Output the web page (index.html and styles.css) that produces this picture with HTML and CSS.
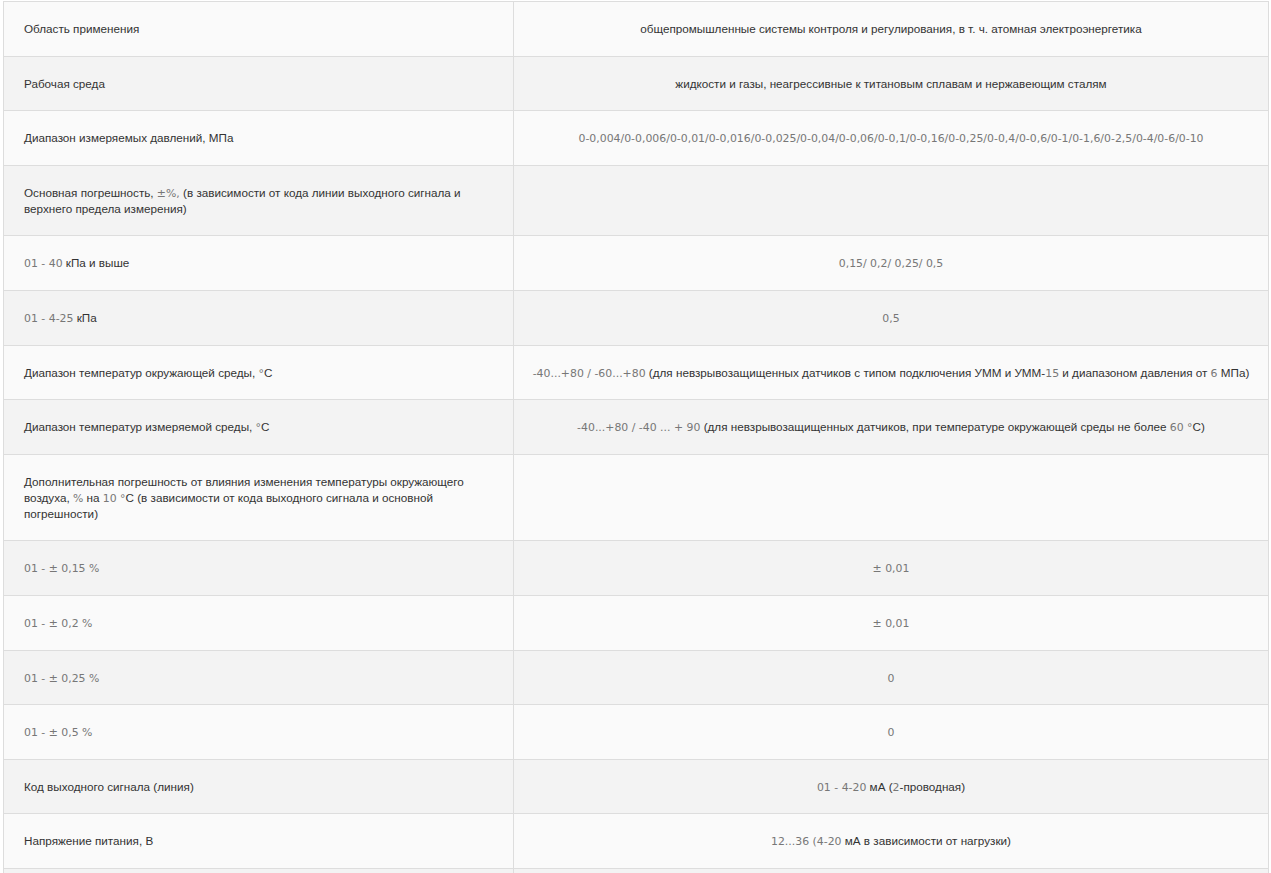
FILE: index.html
```html
<!DOCTYPE html>
<html lang="ru">
<head>
<meta charset="utf-8">
<title>Характеристики</title>
<link rel="stylesheet" href="styles.css">
</head>
<body>
<table class="specs">
  <tbody>
    <tr><td class="k">Область применения</td><td class="v">общепромышленные системы контроля и регулирования, в т. ч. атомная электроэнергетика</td></tr>
    <tr><td class="k">Рабочая среда</td><td class="v">жидкости и газы, неагрессивные к титановым сплавам и нержавеющим сталям</td></tr>
    <tr><td class="k">Диапазон измеряемых давлений, МПа</td><td class="v"><span class="n">0-0,004/0-0,006/0-0,01/0-0,016/0-0,025/0-0,04/0-0,06/0-0,1/0-0,16/0-0,25/0-0,4/0-0,6/0-1/0-1,6/0-2,5/0-4/0-6/0-10</span></td></tr>
    <tr><td class="k">Основная погрешность, <span class="n">±%,</span> (в зависимости от кода линии выходного сигнала и верхнего предела измерения)</td><td class="v"></td></tr>
    <tr><td class="k"><span class="n">01 - 40</span> кПа и выше</td><td class="v"><span class="n">0,15/ 0,2/ 0,25/ 0,5</span></td></tr>
    <tr><td class="k"><span class="n">01 - 4-25</span> кПа</td><td class="v"><span class="n">0,5</span></td></tr>
    <tr><td class="k">Диапазон температур окружающей среды, <span class="n">°</span>С</td><td class="v"><span class="n">-40...+80 / -60...+80</span> (для невзрывозащищенных датчиков с типом подключения УММ и УММ-<span class="n">15</span> и диапазоном давления от <span class="n">6</span> МПа)</td></tr>
    <tr><td class="k">Диапазон температур измеряемой среды, <span class="n">°</span>С</td><td class="v"><span class="n">-40...+80 / -40 ... + 90</span> (для невзрывозащищенных датчиков, при температуре окружающей среды не более <span class="n">60 °</span>С)</td></tr>
    <tr><td class="k">Дополнительная погрешность от влияния изменения температуры окружающего воздуха, <span class="n">%</span> на <span class="n">10 °</span>С (в зависимости от кода выходного сигнала и основной погрешности)</td><td class="v"></td></tr>
    <tr><td class="k"><span class="n">01 - ± 0,15 %</span></td><td class="v"><span class="n">± 0,01</span></td></tr>
    <tr><td class="k"><span class="n">01 - ± 0,2 %</span></td><td class="v"><span class="n">± 0,01</span></td></tr>
    <tr><td class="k"><span class="n">01 - ± 0,25 %</span></td><td class="v"><span class="n">0</span></td></tr>
    <tr><td class="k"><span class="n">01 - ± 0,5 %</span></td><td class="v"><span class="n">0</span></td></tr>
    <tr><td class="k">Код выходного сигнала (линия)</td><td class="v"><span class="n">01 - 4-20</span> мА (<span class="n">2</span>-проводная)</td></tr>
    <tr><td class="k">Напряжение питания, В</td><td class="v"><span class="n">12...36 (4-20</span> мА в зависимости от нагрузки)</td></tr>
    <tr><td class="k">&nbsp;</td><td class="v">&nbsp;</td></tr>
  </tbody>
</table>
</body>
</html>
```

FILE: styles.css
```css
html, body {
  margin: 0;
  padding: 0;
  background: #ffffff;
}

body {
  padding: 1px 2px 0 3px;
  font-family: "Liberation Sans", Arial, sans-serif;
  font-size: 11.7px;
  color: #333333;
}

.specs {
  width: 1266px;
  border-collapse: collapse;
  border: 1px solid #dddddd;
  table-layout: fixed;
}

.specs tr:nth-child(odd) {
  background: #fafafa;
}

.specs tr:nth-child(even) {
  background: #f3f3f3;
}

.specs td {
  border: 1px solid #dddddd;
  padding: 19px 20px 18.6px;
  line-height: 16px;
  vertical-align: middle;
}

.specs .k {
  width: 469px;
  text-align: left;
}

.specs .v {
  padding-left: 6px;
  padding-right: 6px;
  text-align: center;
}

.n {
  font-family: "DejaVu Sans", sans-serif;
  font-size: 10.9px;
  line-height: 12px;
  color: #777777;
}
```
